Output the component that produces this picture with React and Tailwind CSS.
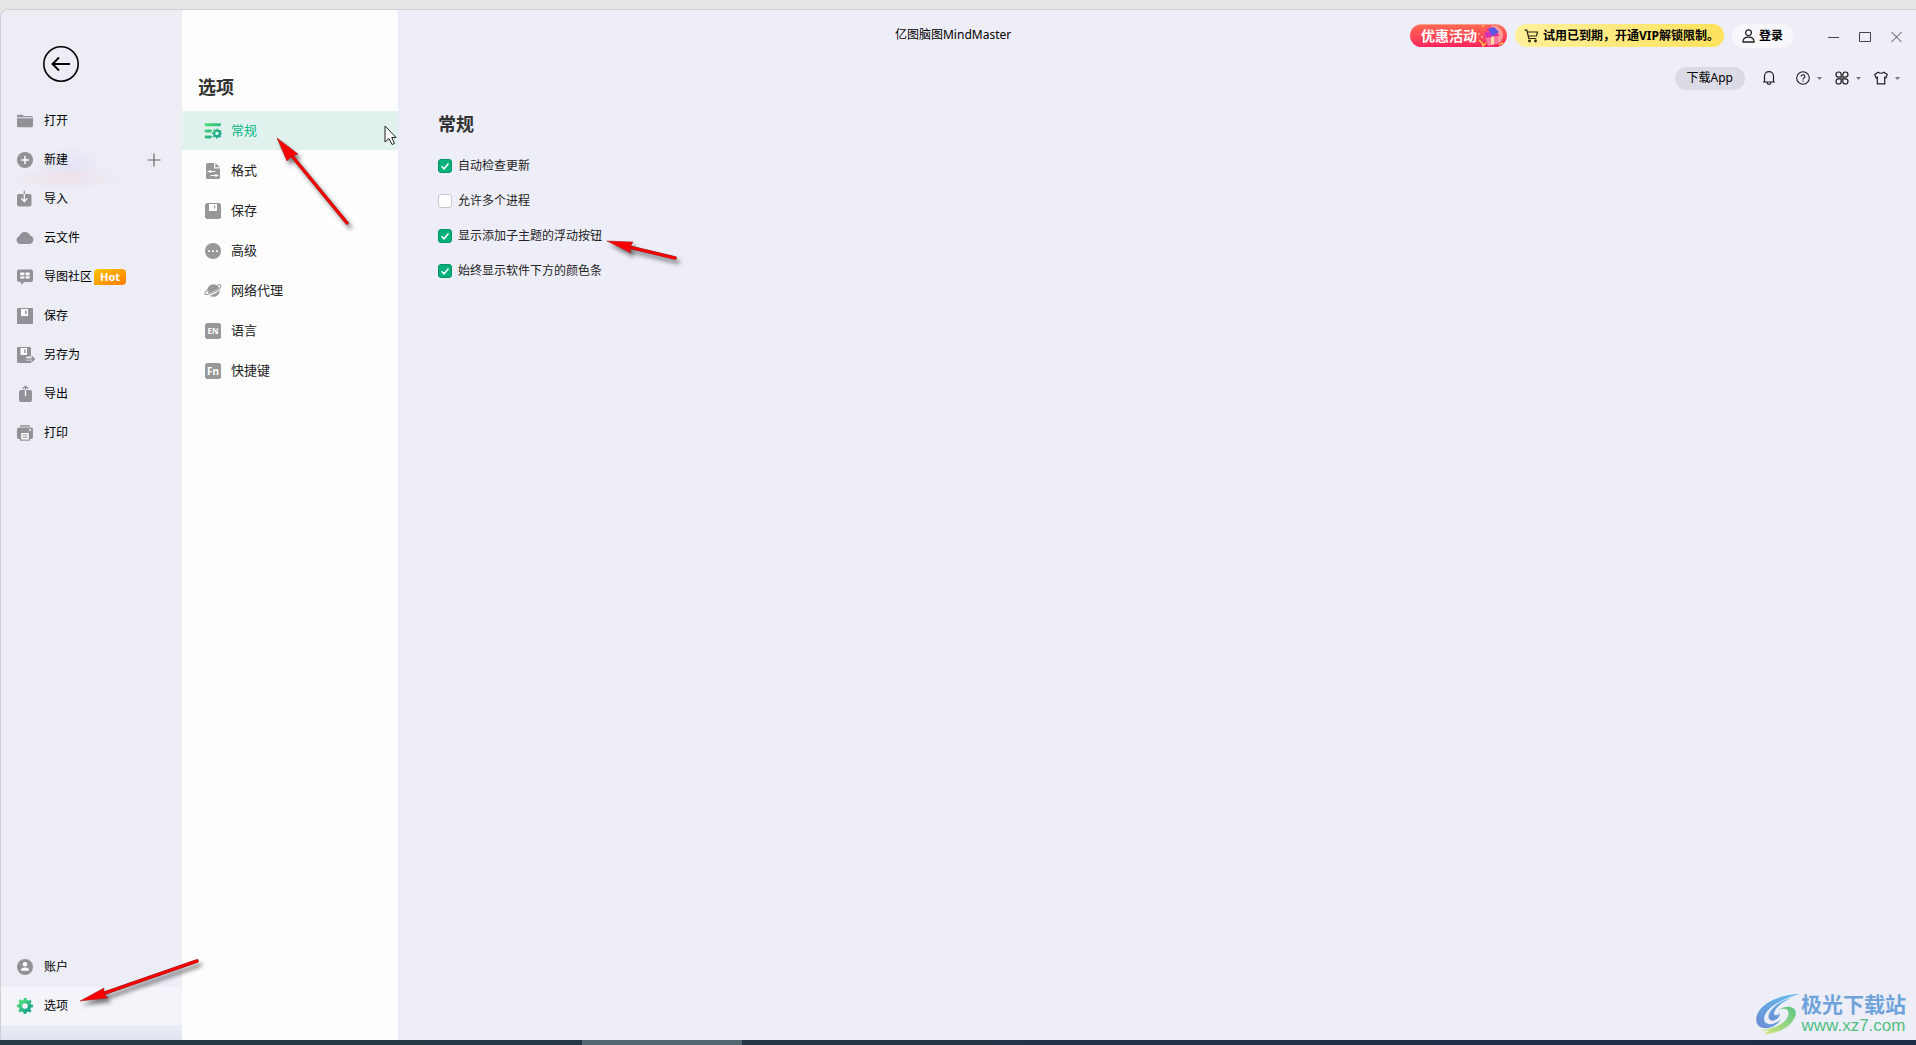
import React, { useState } from "react";

const FolderIcon = () => (
  <svg width="18" height="18" viewBox="0 0 18 18" fill="#929197">
    <path d="M1 4a1.300 1.300 0 0 1 1.300-1.300h4L7.800 4H15.500A1.300 1.300 0 0 1 17 5.200H1z" />
    <path d="M1 6.200h16v7.600a1.500 1.500 0 0 1-1.500 1.500h-13A1.500 1.500 0 0 1 1 13.800z" />
  </svg>
);

const NewIcon = () => (
  <svg width="18" height="18" viewBox="0 0 18 18">
    <circle cx="9" cy="9" r="8" fill="#929197" />
    <path d="M9 5.500v7M5.500 9h7" stroke="#fff" strokeWidth="1.500" strokeLinecap="round" />
  </svg>
);

const ImportIcon = () => (
  <svg width="18" height="18" viewBox="0 0 18 18" fill="none">
    <rect x="1" y="4" width="14.500" height="12.500" rx="2" fill="#929197" />
    <path d="M8.300 .8V4" stroke="#929197" strokeWidth="1.200" />
    <path d="M8.300 4v7M5.300 8.500l3 3 3-3" stroke="#fff" strokeWidth="1.300" />
  </svg>
);

const CloudIcon = () => (
  <svg width="18" height="18" viewBox="0 0 18 18" fill="#929197">
    <path d="M4.500 15A4 4 0 0 1 3.300 7.200 5.800 5.800 0 0 1 14.200 6.600 4.300 4.300 0 0 1 13.500 15z" />
  </svg>
);

const CommunityIcon = () => (
  <svg width="18" height="18" viewBox="0 0 18 18">
    <path d="M3 1.500h12a2 2 0 0 1 2 2v8.500a2 2 0 0 1-2 2H8.500L5 16.800V14H3a2 2 0 0 1-2-2V3.500a2 2 0 0 1 2-2z" fill="#929197" />
    <path d="M4.200 4.500h4.200v2.700H4.200zM4.200 8.400h4.200v2H4.200zM9.600 4.500h4v5.900h-4z" fill="#fff" />
    <path d="M9.600 7.800h4" stroke="#929197" />
  </svg>
);

const DiskIcon = () => (
  <svg width="18" height="18" viewBox="0 0 18 18">
    <rect x="1" y="1" width="16" height="16" rx="1" fill="#929197" />
    <path d="M5 2h7v7H5z" fill="#fff" />
    <path d="M9 3.500h1.500V7H9z" fill="#929197" />
  </svg>
);

const SaveAsIcon = () => (
  <svg width="20" height="18" viewBox="0 0 20 18" fill="none">
    <path d="M2 1h12a1 1 0 0 1 1 1v8l-5 1v3.500h5V17H2a1 1 0 0 1-1-1V2a1 1 0 0 1 1-1z" fill="#929197" />
    <path d="M4.500 2h6.500v7H4.500z" fill="#fff" />
    <path d="M8.200 3.500h1.500V7H8.200z" fill="#929197" />
    <path d="M10 12.900h8M15.500 10.200l2.800 2.700-2.800 2.700" stroke="#929197" strokeWidth="1.500" />
  </svg>
);

const ExportIcon = () => (
  <svg width="18" height="18" viewBox="0 0 18 18" fill="none">
    <rect x="3" y="5" width="13" height="12" rx="2" fill="#929197" />
    <path d="M9.500 5v6" stroke="#fff" strokeWidth="1.300" />
    <path d="M9.500 5V1.500M6.700 3.700l2.800-2.600 2.800 2.600" stroke="#929197" strokeWidth="1.200" />
  </svg>
);

const PrintIcon = () => (
  <svg width="18" height="18" viewBox="0 0 18 18">
    <path d="M4 1.200h10v1.500H4z" fill="#929197" />
    <rect x="1" y="3.500" width="16" height="11.500" rx="2" fill="#929197" />
    <rect x="4" y="8" width="10" height="8.700" fill="#929197" />
    <path d="M5.200 9h7.600v6.500H5.200z" fill="#fff" />
    <path d="M6.500 11h5M6.500 13.300h5" stroke="#929197" />
    <circle cx="14" cy="6" r=".9" fill="#fff" />
  </svg>
);

const AccountIcon = () => (
  <svg width="18" height="18" viewBox="0 0 18 18">
    <circle cx="9" cy="9" r="8" fill="#929197" />
    <circle cx="9" cy="6.300" r="2.300" fill="#fff" />
    <path d="M4.800 12.800c0-2.200 1.700-3.400 4.200-3.400s4.200 1.200 4.200 3.400z" fill="#fff" />
  </svg>
);

const GearIcon = () => (
  <svg width="18" height="18" viewBox="0 0 18 18">
    <defs>
      <linearGradient id="gear" x1="0" y1="0" x2="1" y2="1">
        <stop offset="0" stopColor="#4fe07a" />
        <stop offset="1" stopColor="#139c8d" />
      </linearGradient>
    </defs>
    <circle cx="9" cy="9" r="4.600" fill="none" stroke="url(#gear)" strokeWidth="3.600" />
    <circle cx="9" cy="9" r="6.900" fill="none" stroke="url(#gear)" strokeWidth="2.400" strokeDasharray="2.800 2.619" strokeDashoffset="1.400" />
  </svg>
);

const GeneralIcon = () => (
  <svg width="18" height="18" viewBox="0 0 18 18" fill="none">
    <defs>
      <linearGradient id="general" x1="0" y1="0" x2="18" y2="18" gradientUnits="userSpaceOnUse">
        <stop offset="0" stopColor="#52e472" />
        <stop offset="1" stopColor="#0f948c" />
      </linearGradient>
    </defs>
    <path d="M2 2.700h13.500v.01M2 9h4.500M2 15h4.500" stroke="url(#general)" strokeWidth="2.900" strokeLinecap="round" />
    <circle cx="13" cy="11.500" r="2.900" stroke="url(#general)" strokeWidth="2.200" />
    <circle cx="13" cy="11.500" r="4.300" stroke="url(#general)" strokeWidth="1.600" strokeDasharray="1.700 1.677" strokeDashoffset=".85" />
  </svg>
);

const FormatIcon = () => (
  <svg width="18" height="18" viewBox="0 0 18 18" fill="none">
    <path d="M3.500 1H10v5.500h6V15.500A1.500 1.500 0 0 1 14.500 17h-11A1.500 1.500 0 0 1 2 15.500v-13A1.500 1.500 0 0 1 3.500 1z" fill="#989898" />
    <path d="M11.300 1l4.700 4.300h-4.700z" fill="#989898" />
    <path d="M3.500 9.500h8M6.500 13.500h8" stroke="#fff" />
    <circle cx="6" cy="9.500" r="1.300" fill="#fff" />
    <circle cx="12" cy="13.500" r="1.300" fill="#fff" />
  </svg>
);

const SaveIcon = () => (
  <svg width="18" height="18" viewBox="0 0 18 18">
    <rect x="1" y="1" width="16" height="16" rx="2.500" fill="#989898" />
    <path d="M5 2h8v7H5z" fill="#fff" />
    <path d="M10 3.500h1.200v3H10z" fill="#989898" />
  </svg>
);

const AdvancedIcon = () => (
  <svg width="18" height="18" viewBox="0 0 18 18">
    <circle cx="9" cy="9" r="8" fill="#989898" />
    <path d="M4.200 8.200h1.800v1.800H4.200zM8.100 8.200h1.800v1.800H8.100zM12 8.200h1.800v1.800H12z" fill="#fff" />
  </svg>
);

const ProxyIcon = () => (
  <svg width="18" height="18" viewBox="0 0 18 18" fill="none">
    <circle cx="9.500" cy="8.500" r="6.300" fill="#989898" />
    <path d="M4 8.500C1.500 10.500.6 12 1.700 12.700 4 14 15.300 9 16.500 5" stroke="#fdfdfd" strokeWidth="2.600" />
    <path d="M4 7.500C1.200 9.700.1 11.500 1.200 12.300 3.500 13.600 15.800 8.500 16.900 4.400c.3-1.800-2-1.900-3.600-1.400" stroke="#989898" strokeWidth="1.100" />
  </svg>
);

const LetterIcon = ({ text, size }) => (
  <svg width="18" height="18" viewBox="0 0 18 18">
    <rect x="1" y="1" width="16" height="16" rx="2.500" fill="#989898" />
    <text x="9" y={size > 8 ? 12.800 : 12} textAnchor="middle" fontFamily="Noto Sans, sans-serif" fontWeight="700" fontSize={size} fill="#fff">
      {text}
    </text>
  </svg>
);

const CartIcon = () => (
  <svg width="15" height="14" viewBox="0 0 15 14" fill="none" stroke="#2b2410" strokeWidth="1.200">
    <path d="M.5 1.200h2.300l2 8.300h7.500M3.200 3h10.300l-1 4H4.200" />
    <circle cx="5.500" cy="12" r=".8" fill="#2b2410" />
    <circle cx="11.500" cy="12" r=".8" fill="#2b2410" />
  </svg>
);

const UserIcon = () => (
  <svg width="13" height="14" viewBox="0 0 13 14" fill="none" stroke="#222" strokeWidth="1.300">
    <circle cx="6.500" cy="3.800" r="2.900" />
    <path d="M1 13c0-3.300 2-4.800 5.500-4.800S12 9.700 12 13z" />
  </svg>
);

const GiftArt = () => (
  <svg className="shrink-0" width="28" height="24" viewBox="0 0 28 24" fill="none">
    <circle cx="16" cy="12" r="9.500" fill="#f7457a" />
    <path d="M14 2c6-2 12 3 12 9 0 4-2 7-5 9 1-6-1-12-7-18z" fill="#ff9d9d" />
    <path d="M9 11l12-2 1 3-12 3z" fill="#e0338f" />
    <path d="M9 14l12-2v7l-10 3z" fill="#ff7a9c" />
    <path d="M14 13l3-1v8l-3 1z" fill="#ffd9a0" />
    <path d="M11 5l6-2 5 5-7 4z" fill="#5b55e8" />
    <path d="M10 12c-2-3 1-5 5 0" stroke="#c22be0" strokeWidth="1.500" />
    <path d="M2 16l3 3 1 3 3-3M22 21l3-2 2 2M5 1l2 2" stroke="#ffc24a" strokeWidth="1.400" />
    <path d="M1 9h2v2H1zM4 12h2v2H4z" fill="#ff9a8a" />
  </svg>
);

const BellIcon = () => (
  <svg width="14" height="16" viewBox="0 0 14 16" fill="none" stroke="#1d1d1d" strokeWidth="1.200">
    <path d="M1 12h12M2.500 12V6.200a4.500 4.500 0 0 1 9 0V12M5 12.500c.3 2.600 3.700 2.600 4 0" />
  </svg>
);

const HelpIcon = () => (
  <svg width="14" height="14" viewBox="0 0 14 14" fill="none" stroke="#1d1d1d" strokeWidth="1.100">
    <circle cx="7" cy="7" r="6.300" />
    <path d="M5.200 5.600c0-2.500 3.700-2.300 3.700-.1C8.900 7 7 6.900 7 8.400M7 9.600v1.100" />
  </svg>
);

const AppsIcon = () => (
  <svg width="14" height="14" viewBox="0 0 14 14" fill="none" stroke="#1d1d1d" strokeWidth="1.200">
    <path d="M6.200 6.200H3.400A2.600 2.600 0 1 1 6.200 3.400zM7.800 6.200V3.400a2.600 2.600 0 1 1 2.800 2.800zM6.200 7.800v2.800a2.600 2.600 0 1 1-2.800-2.800zM7.800 7.800h2.800a2.600 2.600 0 1 1-2.800 2.800z" />
  </svg>
);

const ShirtIcon = () => (
  <svg width="14" height="14" viewBox="0 0 14 14" fill="none" stroke="#1d1d1d" strokeWidth="1.200">
    <path d="M4.200 1.200c1.500 1.300 4.100 1.300 5.600 0l3.500 2.300-1.300 3.200-1.300-.5v6.600H3.300V6.200L2 6.700.7 3.500z" />
  </svg>
);

const Caret = () => (
  <svg width="5" height="3" viewBox="0 0 5 3">
    <path d="M0 0h5L2.500 3z" fill="#777" />
  </svg>
);

const menuItems = [
  { name: "打开", icon: <FolderIcon /> },
  { name: "新建", icon: <NewIcon />, add: true },
  { name: "导入", icon: <ImportIcon /> },
  { name: "云文件", icon: <CloudIcon /> },
  { name: "导图社区", icon: <CommunityIcon />, hot: true },
  { name: "保存", icon: <DiskIcon /> },
  { name: "另存为", icon: <SaveAsIcon /> },
  { name: "导出", icon: <ExportIcon /> },
  { name: "打印", icon: <PrintIcon /> },
];

const optionItems = [
  { name: "常规", icon: <GeneralIcon /> },
  { name: "格式", icon: <FormatIcon /> },
  { name: "保存", icon: <SaveIcon /> },
  { name: "高级", icon: <AdvancedIcon /> },
  { name: "网络代理", icon: <ProxyIcon /> },
  { name: "语言", icon: <LetterIcon text="EN" size={8} /> },
  { name: "快捷键", icon: <LetterIcon text="Fn" size={10} /> },
];

const MenuButton = ({ item, active }) => (
  <button className={`flex h-[38px] w-full items-center pl-[15px] text-xs text-black ${active ? "bg-[#f5f4fa]" : ""}`}>
    <span className="flex w-7 shrink-0 items-center">{item.icon}</span>
    <span>{item.name}</span>
    {item.hot && (
      <span className="ml-0.5 flex h-4 w-8 items-center justify-center rounded-t rounded-br bg-gradient-to-br from-[#ffc400] to-[#ff7a00] text-[11px] font-bold text-white">
        Hot
      </span>
    )}
    {item.add && (
      <svg className="mr-[21px] ml-auto" width="14" height="14" viewBox="0 0 14 14">
        <path d="M7 .5v13M.5 7h13" stroke="#666" strokeWidth="1.200" />
      </svg>
    )}
  </button>
);

const CheckRow = ({ label, checked, onChange }) => (
  <label className="flex h-[35px] w-fit items-center gap-1.5 text-xs text-[#222]">
    <span className="grid">
      <input
        type="checkbox"
        checked={checked}
        onChange={onChange}
        className="col-start-1 row-start-1 size-3.5 appearance-none rounded-[3px] border border-[#c8c8cc] bg-white checked:border-[#079464] checked:bg-[#06b07b]"
      />
      {checked && (
        <svg className="pointer-events-none col-start-1 row-start-1" width="14" height="14" viewBox="0 0 14 14" fill="none">
          <path d="M3.500 7.300l2.500 2.500 4.500-5.300" stroke="#fff" strokeWidth="1.500" />
        </svg>
      )}
    </span>
    {label}
  </label>
);

// red pointer, drawn from its tip at the left towards its tail
const Arrow = ({ className, width, height, head, line }) => (
  <svg
    className={`pointer-events-none absolute overflow-visible drop-shadow-[3px_4px_2px_rgba(0,0,0,0.5)] ${className}`}
    width={width}
    height={height}
    fill="#fd0100"
    stroke="#8d1a1a"
    strokeWidth=".5"
  >
    <path d={line} fill="none" stroke="#8d1a1a" strokeWidth="3.500" strokeLinecap="round" />
    <path d={line} fill="none" stroke="#fd0100" strokeWidth="2.700" strokeLinecap="round" />
    <path d={head} />
  </svg>
);

const Watermark = () => (
  <div className="pointer-events-none absolute right-2.5 bottom-1 flex items-center">
    <svg width="46" height="42" viewBox="0 0 46 42">
      <defs>
        <linearGradient id="swirl-blue" x1="1" y1="0" x2="0" y2="1">
          <stop offset="0" stopColor="#62c2ee" />
          <stop offset="1" stopColor="#6b8bd6" />
        </linearGradient>
        <linearGradient id="swirl-green" x1="1" y1="0" x2="0" y2="1">
          <stop offset="0" stopColor="#58c487" />
          <stop offset="1" stopColor="#d8e77a" />
        </linearGradient>
      </defs>
      <path d="M45 1C30 1 11 7 4 18-1 26 1 33 8 35c7 1 15-3 18-9-5 5-13 7-16 3-3-5 2-12 9-17C26 7 35 4 45 1z" fill="url(#swirl-blue)" />
      <path d="M36 5C26 7 17 14 14 21c-2 5 2 8 6 6 3-1 5-4 5-7-3 3-6 3-6 0 1-5 8-11 17-15z" fill="url(#swirl-blue)" />
      <path d="M23 17c8-3 12 0 10 6-3 8-14 13-28 14 3 1 7 1 10 0l-6 4c14 0 27-7 31-17 4-9-6-14-17-7z" fill="url(#swirl-green)" />
    </svg>
    <div className="flex flex-col items-center">
      <span className="text-[21px] leading-6 font-bold text-[#6fa3da]">极光下载站</span>
      <span className="font-['Liberation_Sans',sans-serif] text-[17px] leading-5 text-[#4fbf82]">www.xz7.com</span>
    </div>
  </div>
);

const App = () => {
  const [settings, setSettings] = useState([
    { label: "自动检查更新", checked: true },
    { label: "允许多个进程", checked: false },
    { label: "显示添加子主题的浮动按钮", checked: true },
    { label: "始终显示软件下方的颜色条", checked: true },
  ]);

  const toggle = (index) => {
    setSettings(settings.map((s, i) => (i === index ? { ...s, checked: !s.checked } : s)));
  };

  return (
    <div className="relative flex min-h-screen flex-col bg-[#e6e6e6] font-['Noto_Sans','Noto_Sans_CJK_SC',sans-serif]">
      <div className="h-[9px]" />
      <div className="relative flex flex-1 overflow-hidden rounded-tl-lg border-t border-l border-[#d0d0d4] bg-[#eeeef8]">
        <aside className="flex w-[181px] shrink-0 flex-col bg-[#ecedf5] bg-[radial-gradient(ellipse_60px_12px_at_64px_168px,#f0e2eb,transparent),radial-gradient(ellipse_34px_22px_at_68px_158px,#e2e2f6,transparent),linear-gradient(to_top,#dfe5f3,transparent_16px)]">
          <button aria-label="返回" className="mt-9 ml-[42px] size-9">
            <svg width="36" height="36" viewBox="0 0 36 36" fill="none" stroke="#000">
              <circle cx="18" cy="18" r="17.200" strokeWidth="1.600" />
              <path d="M27 18H10M16 11.500L9.500 18l6.500 6.500" strokeWidth="1.900" />
            </svg>
          </button>
          <nav className="mt-5 flex flex-col gap-px">
            {menuItems.map((item) => (
              <MenuButton key={item.name} item={item} />
            ))}
          </nav>
          <div className="mt-auto mb-[15px] flex flex-col gap-px">
            <MenuButton item={{ name: "账户", icon: <AccountIcon /> }} />
            <MenuButton item={{ name: "选项", icon: <GearIcon /> }} active />
          </div>
        </aside>

        <section className="w-[216px] shrink-0 bg-[#fdfdfd]">
          <h1 className="mt-[63px] ml-4 text-lg leading-7 font-bold text-[#333]">选项</h1>
          <nav className="mt-[10px] flex flex-col gap-px">
            {optionItems.map((item, index) => (
              <button
                key={item.name}
                className={`flex h-[39px] items-center gap-[9px] pl-[22px] text-[13px] ${index === 0 ? "bg-[#e1f2ee] text-[#06b583]" : "text-[#222]"}`}
              >
                {item.icon}
                {item.name}
              </button>
            ))}
          </nav>
        </section>

        <main className="flex-1 border-l border-[#e6e8f6]">
          <header>
            <div className="flex h-10 items-center pt-[14px] pr-[14px] text-xs text-black">
              <span className="ml-[33%] self-start leading-[22px]">亿图脑图MindMaster</span>
              <button className="ml-auto flex h-[23px] w-[97px] items-center self-start overflow-hidden rounded-full border-t border-[#ff9d8f] bg-gradient-to-b from-[#ff6650] to-[#ff1f5c] pl-[11px] text-sm font-bold text-white">
                <span className="shrink-0">优惠活动</span>
                <GiftArt />
              </button>
              <button className="ml-2 flex h-[23px] items-center gap-1 self-start rounded-full bg-gradient-to-r from-[#fff09a] to-[#ffe25c] pr-[5px] pl-[9px] font-bold">
                <CartIcon />
                试用已到期，开通VIP解锁限制。
              </button>
              <button className="ml-2 flex h-6 items-center gap-1 self-start rounded-full bg-[#f7f7fc] px-[10px] font-bold">
                <UserIcon />
                登录
              </button>
              <button aria-label="最小化" className="ml-[35px]">
                <svg width="11" height="12" viewBox="0 0 11 12">
                  <path d="M0 6.500h11" stroke="#444" />
                </svg>
              </button>
              <button aria-label="最大化" className="ml-5">
                <svg width="12" height="12" viewBox="0 0 12 12" fill="none">
                  <path d="M.5 1.500h11v9H.5z" stroke="#444" />
                </svg>
              </button>
              <button aria-label="关闭" className="ml-5">
                <svg width="11" height="12" viewBox="0 0 11 12">
                  <path d="M.5 1l10 10M10.500 1L.5 11" stroke="#444" />
                </svg>
              </button>
            </div>
            <div className="mt-4 flex h-6 items-center justify-end gap-[13px] pr-4">
              <button className="mr-1 h-[23px] rounded-full bg-[#dbdbe5] px-3 text-xs text-black">下载App</button>
              <button aria-label="通知" className="mr-[7px]">
                <BellIcon />
              </button>
              <button aria-label="帮助" className="flex items-center gap-[7px]">
                <HelpIcon />
                <Caret />
              </button>
              <button aria-label="应用" className="flex items-center gap-[7px]">
                <AppsIcon />
                <Caret />
              </button>
              <button aria-label="皮肤" className="flex items-center gap-[7px]">
                <ShirtIcon />
                <Caret />
              </button>
            </div>
          </header>

          <div className="pt-5 pl-[39px]">
            <h2 className="text-lg leading-7 font-bold text-[#333]">常规</h2>
            <div className="mt-[10px]">
              {settings.map((s, index) => (
                <CheckRow key={s.label} label={s.label} checked={s.checked} onChange={() => toggle(index)} />
              ))}
            </div>
          </div>
        </main>

        <Watermark />
      </div>

      {/* taskbar edge */}
      <div className="flex h-[5px] bg-gradient-to-r from-[#263b45] to-[#1f2c48]">
        <div className="ml-[30.4%] w-40 bg-[#526870]" />
      </div>

      <Arrow className="top-[138px] left-[277px]" width="72" height="87" line="M15 18L70 85" head="M0 0L21 16L16 18L14 19L10 23Z" />
      <Arrow className="top-[241px] left-[607px]" width="70" height="20" line="M22 6L68 17" head="M0 0L26 1L23 6L24 12Z" />
      <Arrow className="bottom-[43px] left-[80px]" width="119" height="42" line="M22 34L117 1" head="M0 41L24 28L24 34L28 38Z" />

      <svg className="pointer-events-none absolute top-[125px] left-[384px]" width="14" height="21" viewBox="0 0 14 21">
        <path d="M1 1v16l4-3.500 3 6 2.500-1.200-2.800-5.800H12z" fill="#fff" stroke="#222" />
      </svg>
    </div>
  );
};

export default App;
